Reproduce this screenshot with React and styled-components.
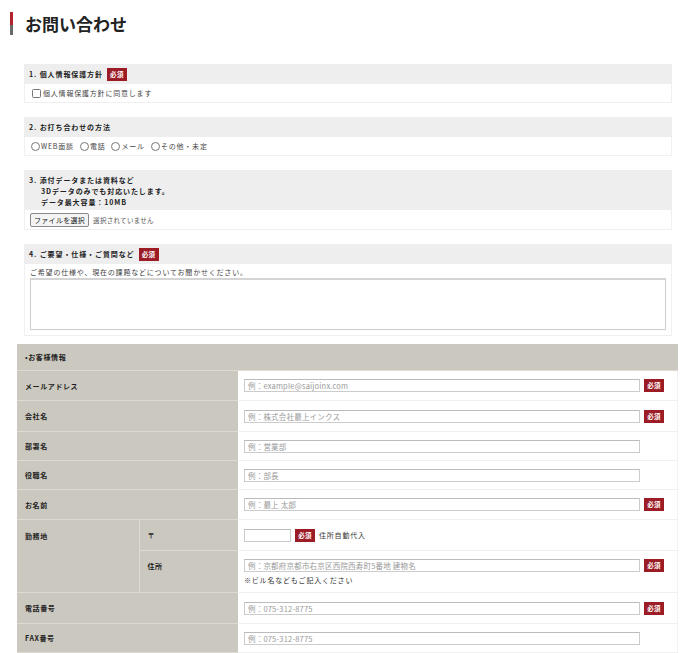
import styled, { createGlobalStyle } from 'styled-components';

const GlobalStyle = createGlobalStyle`
    body {
        margin: 0;
        background: #fff;
        font-family: "Noto Sans CJK JP", "Noto Sans", sans-serif;
        color: #333;
    }
`;

const Page = styled.div`
    width: 700px;
    padding-top: 12px;
`;

const TitleRow = styled.div`
    display: flex;
    align-items: center;
    gap: 12px;
    padding-left: 10px;
    height: 23px;
`;

const TitleBar = styled.span`
    width: 3px;
    height: 23px;
    background: linear-gradient(#b3222d 0 55%, #6a6a6a 55% 100%);
`;

const Title = styled.h1`
    margin: 0;
    font-size: 17px;
    font-weight: bold;
    color: #222;
    letter-spacing: 0;
`;

const Sections = styled.div`
    display: flex;
    flex-direction: column;
    gap: 14px;
    width: 648px;
    margin: 29px 0 0 24px;
`;

const Section = styled.div``;

const SectionHead = styled.div`
    background: #eeeeee;
    height: ${p => (p.$multi ? 'auto' : '20px')};
    padding: ${p => (p.$multi ? '5px 5px 2px' : '0 5px')};
    display: flex;
    flex-direction: ${p => (p.$multi ? 'column' : 'row')};
    justify-content: flex-start;
    align-items: ${p => (p.$multi ? 'flex-start' : 'center')};
    gap: 4px;
    row-gap: 0;
    font-size: 7px;
    font-weight: bold;
    letter-spacing: 0.9px;
    line-height: 11px;
    color: #222;
    box-sizing: border-box;
`;

const Indent = styled.span`
    padding-left: 12px;
`;

const SectionBody = styled.div`
    height: ${p => p.$h || 19}px;
    padding: ${p => p.$pad || '0 5px'};
    border: 1px solid #f0f0f0;
    border-top: none;
    display: flex;
    flex-direction: ${p => (p.$column ? 'column' : 'row')};
    align-items: ${p => (p.$column ? 'stretch' : 'center')};
    gap: ${p => p.$gap || '0'};
    font-size: 7px;
    line-height: 10px;
    letter-spacing: 0.8px;
    color: #444;
    box-sizing: border-box;
`;

const Badge = styled.span`
    display: inline-flex;
    align-items: center;
    justify-content: center;
    width: 20px;
    height: 13px;
    background: #9c1c26;
    color: #fff;
    font-size: 6.5px;
    font-weight: bold;
    letter-spacing: 0.3px;
    line-height: 1;
    flex: none;
`;

const CheckBox = styled.span`
    width: 7px;
    height: 7px;
    border: 1px solid #777;
    border-radius: 1.5px;
    margin: 0 2px 0 2px;
    background: #fff;
    flex: none;
`;

const RadioGroup = styled.div`
    display: flex;
    align-items: center;
    gap: 5px;
`;

const Radio = styled.label`
    display: flex;
    align-items: center;
    gap: 1px;
    &::before {
        content: '';
        width: 7px;
        height: 7px;
        border: 1px solid #777;
        border-radius: 50%;
        margin-left: 1px;
    }
`;

const FileButton = styled.span`
    display: inline-flex;
    align-items: center;
    height: 12px;
    padding: 0 3px;
    border: 1px solid #888;
    border-radius: 2px;
    background: #f4f4f4;
    color: #222;
    font-size: 7px;
    letter-spacing: 0.3px;
    margin-right: 4px;
`;

const FileNote = styled.span`
    font-size: 6.5px;
    letter-spacing: 0.3px;
    color: #555;
`;

const TextArea = styled.div`
    height: 53px;
    box-sizing: border-box;
    border: 1px solid #ccc;
    border-top: 2px solid #d4d4d4;
    background: #fff;
`;

const Table = styled.table`
    width: 661px;
    margin: 8px 0 0 17px;
    border-collapse: collapse;
    font-size: 7px;
    letter-spacing: 0.6px;
`;

const HeadCell = styled.th`
    background: #cbc8bf;
    height: 26px;
    padding: 0 8px;
    text-align: left;
    font-weight: bold;
    color: #222;
    border-bottom: 1px solid #dcdad3;
`;

const Label = styled.th`
    background: #cbc8bf;
    height: ${p => p.$h}px;
    width: ${p => p.$w || 'auto'};
    padding: ${p => (p.$top ? `${p.$top}px 8px 0` : '0 8px')};
    text-align: left;
    vertical-align: ${p => (p.$top ? 'top' : 'middle')};
    font-weight: bold;
    color: #222;
    border-bottom: 1px solid #dcdad3;
    border-right: ${p => (p.$divider ? '1px solid #dcdad3' : 'none')};
    box-sizing: border-box;
`;

const Field = styled.td`
    background: #fff;
    padding: 0 0 0 6px;
    border-bottom: 1px solid #f0f0f0;
    border-right: 1px solid #f2f2f2;
    vertical-align: middle;
`;

const FieldRow = styled.div`
    display: flex;
    align-items: center;
    gap: 4px;
`;

const Input = styled.div`
    width: ${p => p.$w || 396}px;
    height: 13px;
    box-sizing: border-box;
    border: 1px solid #ccc;
    border-top-color: #bbb;
    padding: 0 3px;
    display: flex;
    align-items: center;
    font-size: 7.5px;
    letter-spacing: 0.2px;
    color: #999;
    white-space: nowrap;
    overflow: hidden;
`;

const Note = styled.div`
    margin-top: 3px;
    font-size: 7px;
    letter-spacing: 0.8px;
    color: #333;
`;

const AutoText = styled.span`
    font-size: 7px;
    letter-spacing: 0.8px;
    color: #333;
`;

const rows = [
    { label: 'メールアドレス', ph: '例：example@saijoinx.com', req: true, h: 30 },
    { label: '会社名', ph: '例：株式会社最上インクス', req: true, h: 31 },
    { label: '部署名', ph: '例：営業部', req: false, h: 29 },
    { label: '役職名', ph: '例：部長', req: false, h: 29 },
    { label: 'お名前', ph: '例：最上 太郎', req: true, h: 30 },
];

const bottomRows = [
    { label: '電話番号', ph: '例：075-312-8775', req: true, h: 31 },
    { label: 'FAX番号', ph: '例：075-312-8775', req: false, h: 29 },
];

const SimpleRow = ({ row }) => (
    <tr>
        <Label colSpan={2} $h={row.h}>{row.label}</Label>
        <Field>
            <FieldRow>
                <Input>{row.ph}</Input>
                {row.req && <Badge>必須</Badge>}
            </FieldRow>
        </Field>
    </tr>
);

const App = () => {
    return (
        <Page>
            <GlobalStyle />
            <TitleRow>
                <TitleBar />
                <Title>お問い合わせ</Title>
            </TitleRow>

            <Sections>
                <Section>
                    <SectionHead>1. 個人情報保護方針 <Badge>必須</Badge></SectionHead>
                    <SectionBody>
                        <CheckBox />個人情報保護方針に同意します
                    </SectionBody>
                </Section>

                <Section>
                    <SectionHead>2. お打ち合わせの方法</SectionHead>
                    <SectionBody>
                        <RadioGroup>
                            <Radio>WEB面談</Radio>
                            <Radio>電話</Radio>
                            <Radio>メール</Radio>
                            <Radio>その他・未定</Radio>
                        </RadioGroup>
                    </SectionBody>
                </Section>

                <Section>
                    <SectionHead $multi>
                        <span>3. 添付データまたは資料など</span>
                        <Indent>3Dデータのみでも対応いたします。</Indent>
                        <Indent>データ最大容量：10MB</Indent>
                    </SectionHead>
                    <SectionBody $h={20}>
                        <FileButton>ファイルを選択</FileButton>
                        <FileNote>選択されていません</FileNote>
                    </SectionBody>
                </Section>

                <Section>
                    <SectionHead>4. ご要望・仕様・ご質問など <Badge>必須</Badge></SectionHead>
                    <SectionBody $column $h={72} $pad="3px 5px 5px" $gap="1px">
                        <span>ご希望の仕様や、現在の課題などについてお聞かせください。</span>
                        <TextArea />
                    </SectionBody>
                </Section>
            </Sections>

            <Table>
                <tbody>
                    <tr>
                        <HeadCell colSpan={3}>•お客様情報</HeadCell>
                    </tr>
                    {rows.map(row => <SimpleRow key={row.label} row={row} />)}
                    <tr>
                        <Label rowSpan={2} $h={31} $w="122px" $top={11} $divider>勤務地</Label>
                        <Label $h={31} $w="99px">〒</Label>
                        <Field>
                            <FieldRow>
                                <Input $w={47} />
                                <Badge>必須</Badge>
                                <AutoText>住所自動代入</AutoText>
                            </FieldRow>
                        </Field>
                    </tr>
                    <tr>
                        <Label $h={42} $top={10}>住所</Label>
                        <Field>
                            <FieldRow>
                                <Input>例：京都府京都市右京区西院西寿町5番地 建物名</Input>
                                <Badge>必須</Badge>
                            </FieldRow>
                            <Note>※ビル名などもご記入ください</Note>
                        </Field>
                    </tr>
                    {bottomRows.map(row => <SimpleRow key={row.label} row={row} />)}
                </tbody>
            </Table>
        </Page>
    );
};

export default App;
